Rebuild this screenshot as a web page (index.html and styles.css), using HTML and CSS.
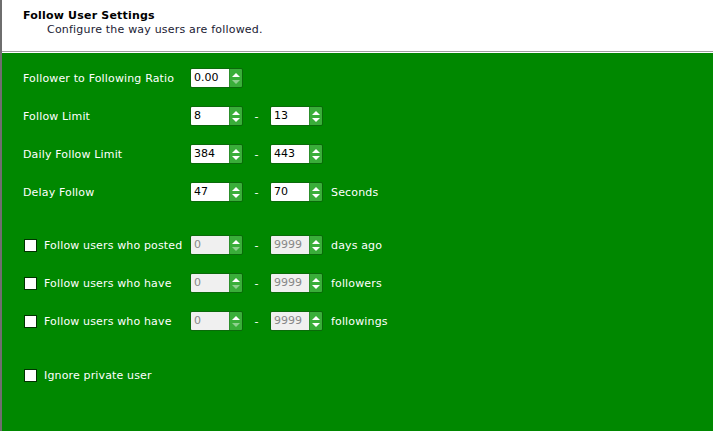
FILE: index.html
```html
<!DOCTYPE html>
<html>
<head>
<meta charset="utf-8">
<link rel="stylesheet" href="styles.css">
</head>
<body>
<div class="frame">
  <div class="header">
    <div class="title">Follow User Settings</div>
    <div class="subtitle">Configure the way users are followed.</div>
  </div>
  <div class="panel">
    <div class="row r1">
      <div class="label">Follower to Following Ratio</div>
      <div class="spin"><div class="val">0.00</div><div class="btn"><span class="up"></span><span class="down dim"></span></div></div>
    </div>
    <div class="row r2">
      <div class="label">Follow Limit</div>
      <div class="spin"><div class="val">8</div><div class="btn"><span class="up"></span><span class="down"></span></div></div>
      <div class="dash">-</div>
      <div class="spin"><div class="val">13</div><div class="btn"><span class="up"></span><span class="down"></span></div></div>
    </div>
    <div class="row r2">
      <div class="label">Daily Follow Limit</div>
      <div class="spin"><div class="val">384</div><div class="btn"><span class="up"></span><span class="down"></span></div></div>
      <div class="dash">-</div>
      <div class="spin"><div class="val">443</div><div class="btn"><span class="up"></span><span class="down"></span></div></div>
    </div>
    <div class="row r2">
      <div class="label">Delay Follow</div>
      <div class="spin"><div class="val">47</div><div class="btn"><span class="up"></span><span class="down"></span></div></div>
      <div class="dash">-</div>
      <div class="spin"><div class="val">70</div><div class="btn"><span class="up"></span><span class="down"></span></div></div>
      <div class="unit">Seconds</div>
    </div>
    <div class="row r3">
      <div class="label chk"><span class="box"></span>Follow users who posted</div>
      <div class="spin off"><div class="val">0</div><div class="btn"><span class="up"></span><span class="down dim"></span></div></div>
      <div class="dash">-</div>
      <div class="spin off"><div class="val">9999</div><div class="btn"><span class="up"></span><span class="down"></span></div></div>
      <div class="unit">days ago</div>
    </div>
    <div class="row r2">
      <div class="label chk"><span class="box"></span>Follow users who have</div>
      <div class="spin off"><div class="val">0</div><div class="btn"><span class="up"></span><span class="down dim"></span></div></div>
      <div class="dash">-</div>
      <div class="spin off"><div class="val">9999</div><div class="btn"><span class="up"></span><span class="down"></span></div></div>
      <div class="unit">followers</div>
    </div>
    <div class="row r2">
      <div class="label chk"><span class="box"></span>Follow users who have</div>
      <div class="spin off"><div class="val">0</div><div class="btn"><span class="up"></span><span class="down dim"></span></div></div>
      <div class="dash">-</div>
      <div class="spin off"><div class="val">9999</div><div class="btn"><span class="up"></span><span class="down"></span></div></div>
      <div class="unit">followings</div>
    </div>
    <div class="row r4">
      <div class="label chk"><span class="box"></span>Ignore private user</div>
    </div>
  </div>
</div>
</body>
</html>
```
FILE: styles.css
```css
html, body {
  margin: 0;
  padding: 0;
  height: 100%;
}
body {
  font-family: "DejaVu Sans", Verdana, sans-serif;
  font-size: 11px;
  overflow: hidden;
}
.frame {
  height: 431px;
  border-left: 2px solid #6e6e6e;
  display: flex;
  flex-direction: column;
  box-sizing: border-box;
}
.header {
  background: #fff;
  height: 52px;
  box-sizing: border-box;
  padding: 9px 0 0 21px;
  border-bottom: 1px solid #a0a0a0;
}
.title {
  font-weight: bold;
  color: #000;
  line-height: 13px;
  letter-spacing: 0.2px;
}
.subtitle {
  color: #1a1a33;
  line-height: 13px;
  margin-top: 1px;
  padding-left: 24px;
  letter-spacing: 0.2px;
}
.panel {
  flex: 1;
  background: #008800;
  border-top: 1px solid #fff;
  padding: 14px 0 0 21px;
  color: #fff;
}
.row {
  display: flex;
  align-items: center;
  height: 22px;
}
.r2 { margin-top: 16px; }
.r3 { margin-top: 31px; }
.r4 { margin-top: 32px; }
.label {
  width: 167px;
  display: flex;
  align-items: center;
  letter-spacing: 0.15px;
}
.box {
  width: 11px;
  height: 11px;
  background: #fff;
  border: 1px solid #003300;
  margin: 0 7px 0 1px;
}
.spin {
  display: flex;
  width: 53px;
  height: 20px;
  box-sizing: border-box;
  border: 1px solid #0a6a0a;
  border-radius: 2px;
  overflow: hidden;
}
.val {
  flex: 1;
  background: #fff;
  color: #000;
  padding: 2px 0 0 3px;
  line-height: 14px;
}
.off .val {
  background: #f0f0f0;
  color: #888;
}
.btn {
  width: 12px;
  background: #3aae3a;
  border-left: 1px solid #2c8f2c;
  display: flex;
  flex-direction: column;
  align-items: center;
  justify-content: center;
  gap: 3px;
}
.up, .down {
  width: 0;
  height: 0;
  border-left: 4px solid transparent;
  border-right: 4px solid transparent;
}
.up { border-bottom: 4px solid #fff; }
.down { border-top: 4px solid #fff; }
.down.dim { border-top-color: #8fd08f; }
.dash {
  width: 27px;
  text-align: center;
}
.unit {
  margin-left: 8px;
  letter-spacing: 0.15px;
}
```
